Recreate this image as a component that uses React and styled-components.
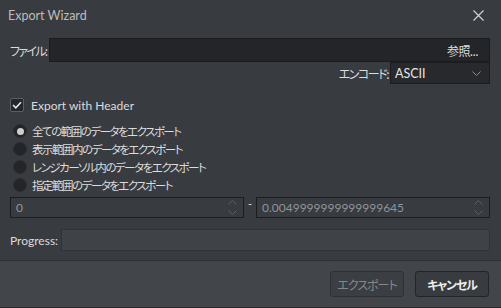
import styled, { createGlobalStyle } from "styled-components";

const GlobalStyle = createGlobalStyle`
  html, body {
    margin: 0;
    padding: 0;
    background: #383b40;
  }
  * {
    box-sizing: border-box;
  }
`;

const Window = styled.div`
  width: 501px;
  height: 308px;
  background: #383b40;
  display: flex;
  flex-direction: column;
  font-family: Lato, "Noto Sans CJK JP", sans-serif;
  font-size: 12px;
  color: #dcdcdc;
  border-bottom: 1px solid #26282b;
  overflow: hidden;
`;

// Japanese text: proportional kana to mimic Meiryo UI widths
const Jp = styled.span`
  font-family: "Noto Sans CJK JP", sans-serif;
  font-feature-settings: "palt" 1;
  font-size: ${(p) => p.$size || 11.5}px;
  letter-spacing: ${(p) => p.$ls ?? -1.5}px;
  white-space: nowrap;
`;

const TitleBar = styled.div`
  height: 30px;
  display: flex;
  align-items: center;
  justify-content: space-between;
  padding: 0 17px 0 8px;
`;

const Title = styled.span`
  color: #bdbdbd;
  font-size: 12.5px;
`;

const Body = styled.div`
  flex: 1;
  padding: 8px 11px 0 10px;
  display: flex;
  flex-direction: column;
`;

const Row = styled.div`
  display: flex;
  align-items: center;
  justify-content: ${(p) => (p.$end ? "flex-end" : "flex-start")};
  height: ${(p) => p.$h || 22}px;
  margin-top: ${(p) => p.$mt || 0}px;
`;

const Label = styled.span`
  color: #dcdcdc;
  white-space: nowrap;
  margin-right: ${(p) => p.$mr || 3}px;
`;

const FileInput = styled.div`
  flex: 1;
  height: 24px;
  background: #242528;
  border: 1px solid #1b1c1e;
  display: flex;
  align-items: center;
  justify-content: flex-end;
  padding-right: 11px;
  color: #dcdcdc;
`;

const Select = styled.div`
  width: 100px;
  height: 22px;
  background: #28292c;
  border: 1px solid #1b1c1e;
  display: flex;
  align-items: center;
  justify-content: space-between;
  padding: 0 8px 0 4px;
  color: #e6e6e6;
  font-size: 12.5px;
`;

const CheckRow = styled.label`
  display: flex;
  align-items: center;
  gap: 7px;
  margin-top: 14px;
  height: 14px;
`;

const CheckBox = styled.span`
  width: 14px;
  height: 14px;
  border-radius: 2px;
  background: #26272a;
  border: 1px solid #5b5e63;
  display: flex;
  align-items: center;
  justify-content: center;
`;

const RadioList = styled.div`
  display: flex;
  flex-direction: column;
  margin-top: 10px;
`;

const RadioRow = styled.div`
  display: flex;
  align-items: center;
  gap: 5px;
  height: 18px;
  padding-left: 3px;
`;

const Radio = styled.span`
  width: 14px;
  height: 14px;
  border-radius: 50%;
  background: #232528;
  border: 1px solid #2b2d30;
  display: flex;
  align-items: center;
  justify-content: center;

  &::after {
    content: "";
    display: ${(p) => (p.$checked ? "block" : "none")};
    width: 7px;
    height: 7px;
    border-radius: 50%;
    background: #cfcfcf;
  }
`;

const SpinBox = styled.div`
  flex: 1;
  height: 21px;
  border: 1px solid #1c1d20;
  background: #383b40;
  display: flex;
  align-items: center;
  justify-content: space-between;
  padding: 0 6px 0 5px;
  color: #8f949a;
`;

const Dash = styled.span`
  width: 12px;
  text-align: center;
  color: #e0e0e0;
  font-size: 11px;
  line-height: 1;
  margin-top: -8px;
`;

const Progress = styled.div`
  flex: 1;
  height: 22px;
  background: #3f4246;
  border: 1px solid #303236;
`;

const Footer = styled.div`
  height: 47px;
  border-top: 1px solid #2d3034;
  background: #424549;
  display: flex;
  align-items: flex-start;
  justify-content: flex-end;
  gap: 11px;
  padding: 10px 12px 0 0;
`;

const Button = styled.button`
  width: 74px;
  height: 26px;
  border-radius: 3px;
  font-family: inherit;
  background: ${(p) => (p.disabled ? "#3b3e42" : "#383b3f")};
  border: 1px solid ${(p) => (p.disabled ? "#2e3034" : "#232528")};
  color: ${(p) => (p.disabled ? "#85898e" : "#ececec")};
  font-weight: ${(p) => (p.disabled ? 400 : 700)};
  padding: 0;
`;

const Chevron = ({ up, color = "#6e7277" }) => (
  <svg width="9" height="5" viewBox="0 0 9 5">
    <path
      d={up ? "M0.5 4.5 L4.5 0.5 L8.5 4.5" : "M0.5 0.5 L4.5 4.5 L8.5 0.5"}
      fill="none"
      stroke={color}
      strokeWidth="1"
    />
  </svg>
);

const Arrows = styled.span`
  display: flex;
  flex-direction: column;
  gap: 5px;
`;

const radios = [
  "全ての範囲のデータをエクスポート",
  "表示範囲内のデータをエクスポート",
  "レンジカーソル内のデータをエクスポート",
  "指定範囲のデータをエクスポート",
];

const App = () => {
  return (
    <>
      <GlobalStyle />
      <Window>
        <TitleBar>
          <Title>Export Wizard</Title>
          <svg width="11" height="11" viewBox="0 0 11 11">
            <path d="M0.5 0.5 L10.5 10.5 M10.5 0.5 L0.5 10.5" stroke="#d0d0d0" strokeWidth="1.2" />
          </svg>
        </TitleBar>
        <Body>
          <Row $h={24}>
            <Label $mr={3}>
              <Jp $size={12} $ls={-1.7}>ファイル:</Jp>
            </Label>
            <FileInput>
              <Jp $size={12} $ls={-0.6}>参照...</Jp>
            </FileInput>
          </Row>
          <Row $h={22} $end>
            <Label $mr={2}>
              <Jp $size={12} $ls={-1.5}>エンコード:</Jp>
            </Label>
            <Select>
              <span>ASCII</span>
              <Chevron color="#8a8e93" />
            </Select>
          </Row>
          <CheckRow>
            <CheckBox>
              <svg width="10" height="8" viewBox="0 0 10 8">
                <path d="M1 4 L3.8 6.8 L9 1.2" fill="none" stroke="#e6e6e6" strokeWidth="1.6" />
              </svg>
            </CheckBox>
            <span>Export with Header</span>
          </CheckRow>
          <RadioList>
            {radios.map((text, i) => (
              <RadioRow key={text}>
                <Radio $checked={i === 0} />
                <Jp>{text}</Jp>
              </RadioRow>
            ))}
          </RadioList>
          <Row $h={21} $mt={3}>
            <SpinBox>
              <span>0</span>
              <Arrows>
                <Chevron up color="#5c6065" />
                <Chevron color="#5c6065" />
              </Arrows>
            </SpinBox>
            <Dash>-</Dash>
            <SpinBox>
              <span>0.0049999999999999645</span>
              <Arrows>
                <Chevron up color="#5c6065" />
                <Chevron color="#5c6065" />
              </Arrows>
            </SpinBox>
          </Row>
          <Row $h={22} $mt={11}>
            <Label $mr={3}>Progress:</Label>
            <Progress />
          </Row>
        </Body>
        <Footer>
          <Button disabled>
            <Jp $size={12} $ls={-1}>エクスポート</Jp>
          </Button>
          <Button>
            <Jp $size={12} $ls={-1.2}>キャンセル</Jp>
          </Button>
        </Footer>
      </Window>
    </>
  );
};

export default App;
